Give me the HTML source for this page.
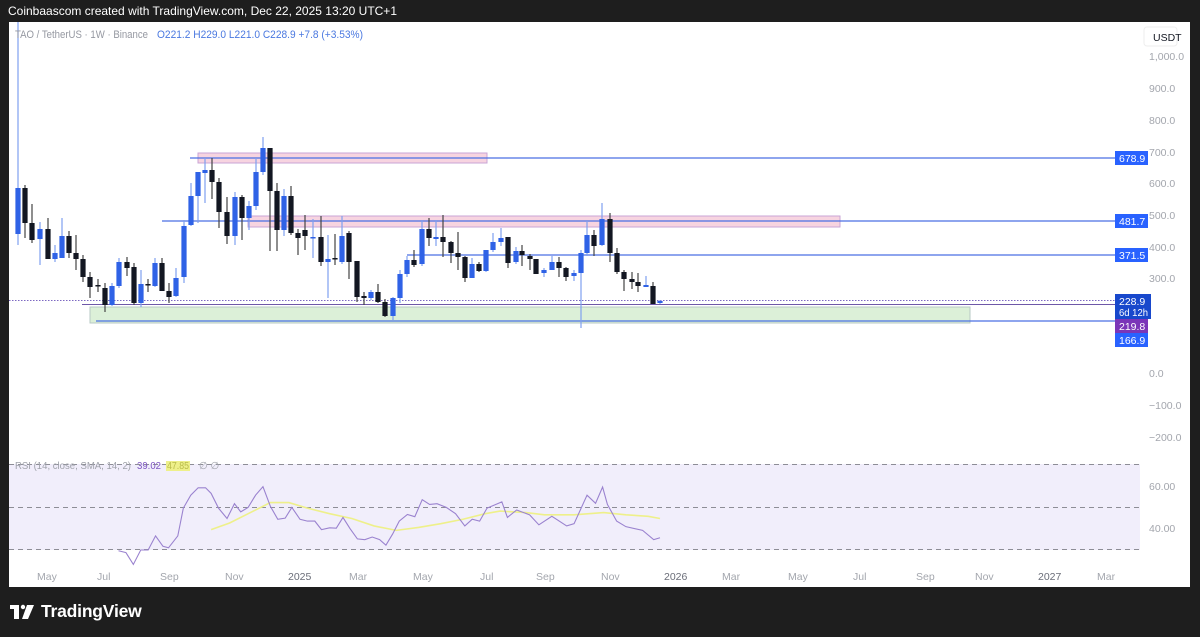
<!DOCTYPE html>
<html><head><meta charset="utf-8"><style>
html,body{margin:0;padding:0;background:#1e1e1e;width:1200px;height:637px;overflow:hidden;font-family:"Liberation Sans",sans-serif}
#hdr{position:absolute;left:8px;top:4px;color:#fff;font-size:12px}
#chart{position:absolute;left:9px;top:22px;width:1181px;height:565px;background:#fff}
#tv{position:absolute;left:41px;top:601px;color:#fff;font-size:17.5px;font-weight:bold;letter-spacing:-0.2px}
</style></head><body>
<div id="hdr">Coinbaascom created with TradingView.com, Dec 22, 2025 13:20 UTC+1</div>
<div id="chart"></div>
<svg width="1200" height="637" style="position:absolute;left:0;top:0" font-family="Liberation Sans, sans-serif">
<rect x="9" y="464" width="1131" height="86" fill="#f1eefb"/>
<g stroke="#8d8d96" stroke-dasharray="5,4" stroke-width="1">
<line x1="9" y1="464.5" x2="1140" y2="464.5"/><line x1="9" y1="507.5" x2="1140" y2="507.5"/><line x1="9" y1="549.5" x2="1140" y2="549.5"/>
</g>
<rect x="198" y="153" width="289" height="10" fill="#f7d4e0" stroke="#c9a4d6" stroke-width="1"/>
<rect x="248" y="216" width="592" height="11" fill="#f7d4e0" stroke="#c9a4d6" stroke-width="1"/>
<rect x="90" y="307" width="880" height="16" fill="#dcf0d8" stroke="#b7c9c4" stroke-width="1"/>
<g stroke="#4a6fe3" stroke-width="1.2">
<line x1="190" y1="158" x2="1116" y2="158"/>
<line x1="162" y1="221" x2="1116" y2="221"/>
<line x1="407" y1="255" x2="1116" y2="255"/>
<line x1="96" y1="321" x2="1116" y2="321"/>
</g>
<line x1="82" y1="304.5" x2="1116" y2="304.5" stroke="#6e58a8" stroke-width="1"/>
<line x1="9" y1="300.5" x2="1116" y2="300.5" stroke="#7d68c2" stroke-width="1" stroke-dasharray="1.5,1.5"/>
<g id="candles"></g>
<g transform="translate(100,460) scale(0.37037)" fill="none">
<polyline vector-effect="non-scaling-stroke" stroke="#eef08a" stroke-width="1.6" points="300,188 350,170 400,145 460,115 510,115 560,130 620,145 680,158 740,178 800,190 860,182 920,172 980,160 1040,145 1080,138 1150,142 1200,148 1280,148 1360,142 1420,148 1480,152 1512,158"/>
<polyline vector-effect="non-scaling-stroke" stroke="#9a82cf" stroke-width="1.1" points="50,245 70,250 90,282 110,243 130,243 150,205 170,233 185,237 210,205 225,130 245,95 265,75 285,75 300,90 320,130 343,158 363,118 380,140 400,128 420,95 440,72 460,125 480,160 500,157 518,128 540,160 560,165 580,165 598,188 620,183 638,184 656,155 675,185 695,213 715,215 735,208 755,215 772,230 790,200 808,165 830,147 850,153 870,107 890,120 910,118 935,128 960,145 985,178 1005,160 1025,165 1045,130 1085,113 1100,155 1125,135 1160,148 1185,175 1220,152 1260,178 1280,172 1315,95 1338,117 1357,73 1370,120 1395,165 1420,180 1465,190 1495,215 1512,210"/>
</g>
<text x="15" y="38" font-size="11" fill="#9598a1" textLength="133" lengthAdjust="spacingAndGlyphs">TAO / TetherUS · 1W · Binance</text>
<text x="157" y="38" font-size="11" fill="#4a78e0" textLength="206" lengthAdjust="spacingAndGlyphs">O221.2  H229.0  L221.0  C228.9  +7.8 (+3.53%)</text>
<text x="15" y="469" font-size="10" fill="#a0a3ab" textLength="116" lengthAdjust="spacingAndGlyphs">RSI (14, close, SMA, 14, 2)</text>
<text x="137" y="469" font-size="10" fill="#7e57c2" textLength="24" lengthAdjust="spacingAndGlyphs">39.02</text>
<rect x="166" y="461" width="24" height="10" fill="#eef08a"/>
<text x="167" y="469" font-size="10" fill="#b9bc4a" textLength="22" lengthAdjust="spacingAndGlyphs">47.85</text>
<text x="199" y="469" font-size="10" fill="#a0a3ab">∅ ∅</text>
<rect x="1144" y="27" width="33" height="19" rx="3" fill="#fff" stroke="#eee"/>
<text x="1153" y="41" font-size="10.5" fill="#131722">USDT</text>
<g font-size="10.5" fill="#a3a6ad">
<text x="1149" y="60">1,000.0</text><text x="1149" y="92">900.0</text><text x="1149" y="124">800.0</text>
<text x="1149" y="156">700.0</text><text x="1149" y="187">600.0</text><text x="1149" y="219">500.0</text>
<text x="1149" y="251">400.0</text><text x="1149" y="282">300.0</text><text x="1149" y="377">0.0</text>
<text x="1149" y="409">−100.0</text><text x="1149" y="441">−200.0</text>
<text x="1149" y="490">60.00</text><text x="1149" y="532">40.00</text>
</g>
<g font-size="10.5" fill="#fff">
<rect x="1115" y="151" width="33" height="14" fill="#2962ff"/><text x="1119" y="162">678.9</text>
<rect x="1115" y="214" width="33" height="14" fill="#2962ff"/><text x="1119" y="225">481.7</text>
<rect x="1115" y="248" width="33" height="14" fill="#2962ff"/><text x="1119" y="259">371.5</text>
<rect x="1115" y="294" width="36" height="25" fill="#1848cc"/><text x="1119" y="305">228.9</text><text x="1119" y="316" textLength="29" lengthAdjust="spacingAndGlyphs">6d 12h</text>
<rect x="1115" y="319" width="33" height="14" fill="#7b36b8"/><text x="1119" y="330">219.8</text>
<rect x="1115" y="333" width="33" height="14" fill="#2962ff"/><text x="1119" y="344">166.9</text>
</g>
<g font-size="10.5" fill="#a3a6ad">
<text x="37" y="580">May</text><text x="97" y="580">Jul</text><text x="160" y="580">Sep</text><text x="225" y="580">Nov</text>
<text x="288" y="580" fill="#6a6d78">2025</text><text x="349" y="580">Mar</text><text x="413" y="580">May</text><text x="480" y="580">Jul</text>
<text x="536" y="580">Sep</text><text x="601" y="580">Nov</text><text x="664" y="580" fill="#6a6d78">2026</text><text x="722" y="580">Mar</text>
<text x="788" y="580">May</text><text x="853" y="580">Jul</text><text x="916" y="580">Sep</text><text x="975" y="580">Nov</text>
<text x="1038" y="580" fill="#6a6d78">2027</text><text x="1097" y="580">Mar</text>
</g>
<g fill="#fff"><rect x="10" y="605" width="9" height="4"/><rect x="14" y="605" width="5" height="14"/><circle cx="23" cy="607" r="2.2"/><path d="M27 605 H34 L28 619 H22 Z"/></g>
</svg>
<div id="tv">TradingView</div>
<script>
var B="#2f62e6",K="#131722";
var d=[[18,188,234,22,245,B],[25,188,223,185,238,K],[32,223,240,204,243,K],[40,229,239,222,265,B],[48,229,259,218,259,K],[55,253,259,245,262,B],[62,236,258,218,258,B],[69,236,253,231,258,K],[76,253,259,235,270,K],[83,259,277,255,282,K],[90,277,287,272,298,K],[98,285,286,279,292,K],[105,288,305,283,312,K],[112,286,305,283,306,B],[119,262,286,258,288,B],[127,262,268,257,276,K],[134,267,303,263,305,K],[141,284,303,270,307,B],[148,284,285,279,292,K],[155,263,286,258,287,B],[162,263,291,258,291,K],[169,291,297,283,303,K],[176,278,296,268,297,B],[184,226,277,220,283,B],[191,196,225,183,226,B],[198,172,196,172,223,B],[205,170,173,158,203,B],[212,170,182,158,199,K],[219,182,212,178,228,K],[227,212,236,197,244,K],[235,197,236,192,245,B],[242,197,218,195,240,K],[249,206,218,201,230,B],[256,172,206,158,210,B],[263,148,172,137,175,B],[270,148,191,148,251,K],[277,191,230,183,251,K],[284,196,230,189,236,B],[291,196,233,186,235,K],[298,233,238,229,255,K],[305,230,236,215,250,K],[313,237,238,219,258,B],[321,237,262,216,266,K],[328,259,262,235,298,B],[335,258,259,234,265,K],[342,236,262,216,264,B],[349,233,262,231,279,K],[357,261,297,261,302,K],[364,296,298,292,305,K],[371,292,298,290,300,B],[378,292,302,284,303,K],[385,302,316,299,317,K],[393,298,316,297,320,B],[400,274,298,270,303,B],[407,260,274,256,277,B],[414,260,265,250,267,K],[422,229,264,220,266,B],[429,229,238,218,246,K],[436,237,239,220,246,B],[443,237,242,215,257,K],[451,242,253,241,263,K],[458,253,257,232,270,K],[465,257,278,256,282,K],[472,264,278,258,278,B],[479,264,271,262,272,K],[486,250,271,250,272,B],[493,242,250,233,252,B],[501,238,242,228,246,B],[508,237,263,237,268,K],[516,251,262,247,264,B],[522,251,255,245,266,K],[530,256,259,254,270,K],[536,259,274,259,274,K],[544,270,273,268,277,B],[552,262,270,256,270,B],[559,262,268,257,277,K],[566,268,277,267,281,K],[574,273,276,270,281,B],[581,253,273,250,328,B],[587,235,253,221,256,B],[594,235,246,230,256,K],[602,219,245,203,246,B],[610,219,253,213,262,K],[617,253,272,248,274,K],[624,272,279,270,291,K],[632,279,282,272,289,K],[638,282,286,273,292,K],[646,285,287,276,287,B],[653,286,304,282,304,K],[660,301,303,300,304,B]];
var s="";d.forEach(function(c){var wc=c[5]==B?"#7fa0ef":"#444";s+='<line x1="'+c[0]+'" x2="'+c[0]+'" y1="'+c[3]+'" y2="'+c[4]+'" stroke="'+wc+'" stroke-width="1.2"/>';var h=Math.max(1.5,c[2]-c[1]);s+='<rect x="'+(c[0]-2.6)+'" y="'+c[1]+'" width="5.2" height="'+h+'" fill="'+c[5]+'"/>';});
document.getElementById("candles").innerHTML=s;
</script>
</body></html>
